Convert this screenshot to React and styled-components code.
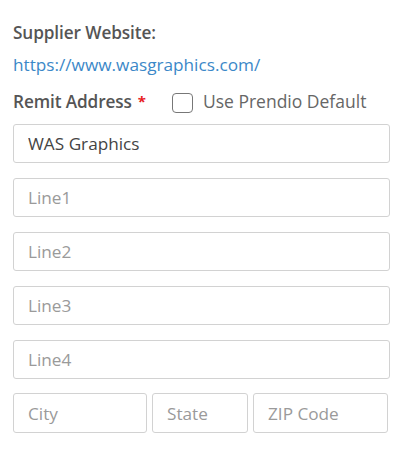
import React from "react";
import styled, { createGlobalStyle } from "styled-components";

const Global = createGlobalStyle`
  html, body { margin: 0; padding: 0; background: #fff; }
  body { font-family: "Open Sans", "Noto Sans", sans-serif; }
`;

const Form = styled.div`
  width: 404px;
  height: 460px;
  box-sizing: border-box;
  padding: 21px 14px 0 13px;
  display: flex;
  flex-direction: column;
`;

const Label = styled.div`
  font-size: 17.2px;
  font-weight: 600;
  color: #555;
  line-height: 24px;
  letter-spacing: -0.1px;
`;

const Link = styled.a`
  font-size: 17.2px;
  color: #3b88c8;
  text-decoration: none;
  line-height: 24px;
  margin-top: 8px;
`;

const RemitRow = styled.div`
  display: flex;
  align-items: center;
  margin-top: 12px;
  height: 24px;
`;

const Star = styled.span`
  color: #e8201f;
  font-weight: 700;
  font-size: 15px;
  margin-left: 6px;
  vertical-align: 1px;
`;

const CheckWrap = styled.label`
  display: flex;
  align-items: center;
  margin-left: 26px;
  font-size: 17.5px;
  color: #666;
  cursor: pointer;
`;

const Box = styled.span`
  width: 19px;
  height: 18px;
  margin-top: 3px;
  border: 1.5px solid #777;
  border-radius: 4px;
  margin-right: 10px;
  box-sizing: content-box;
`;

const Fields = styled.div`
  display: flex;
  flex-direction: column;
  gap: 15px;
  margin-top: 11px;
`;

const Input = styled.input`
  box-sizing: border-box;
  width: 377px;
  height: 39px;
  border: 1px solid #d2d2d2;
  border-radius: 3px;
  padding: 0 14px;
  font-family: "Open Sans", sans-serif;
  font-size: 17.2px;
  color: #444;
  outline: none;
  &::placeholder { color: #9a9a9a; }
`;

const Row = styled.div`
  display: grid;
  grid-template-columns: 134px 96px 135px;
  gap: 5px;
  margin-top: -1px;
  & > input { width: 100%; height: 40px; }
`;

export default function App() {
  return (
    <>
      <Global />
      <Form>
        <Label>Supplier Website:</Label>
        <Link href="#">https://www.wasgraphics.com/</Link>
        <RemitRow>
          <Label>Remit Address<Star>*</Star></Label>
          <CheckWrap>
            <Box />
            Use Prendio Default
          </CheckWrap>
        </RemitRow>
        <Fields>
          <Input defaultValue="WAS Graphics" />
          <Input placeholder="Line1" />
          <Input placeholder="Line2" />
          <Input placeholder="Line3" />
          <Input placeholder="Line4" />
          <Row>
            <Input placeholder="City" />
            <Input placeholder="State" />
            <Input placeholder="ZIP Code" />
          </Row>
        </Fields>
      </Form>
    </>
  );
}
